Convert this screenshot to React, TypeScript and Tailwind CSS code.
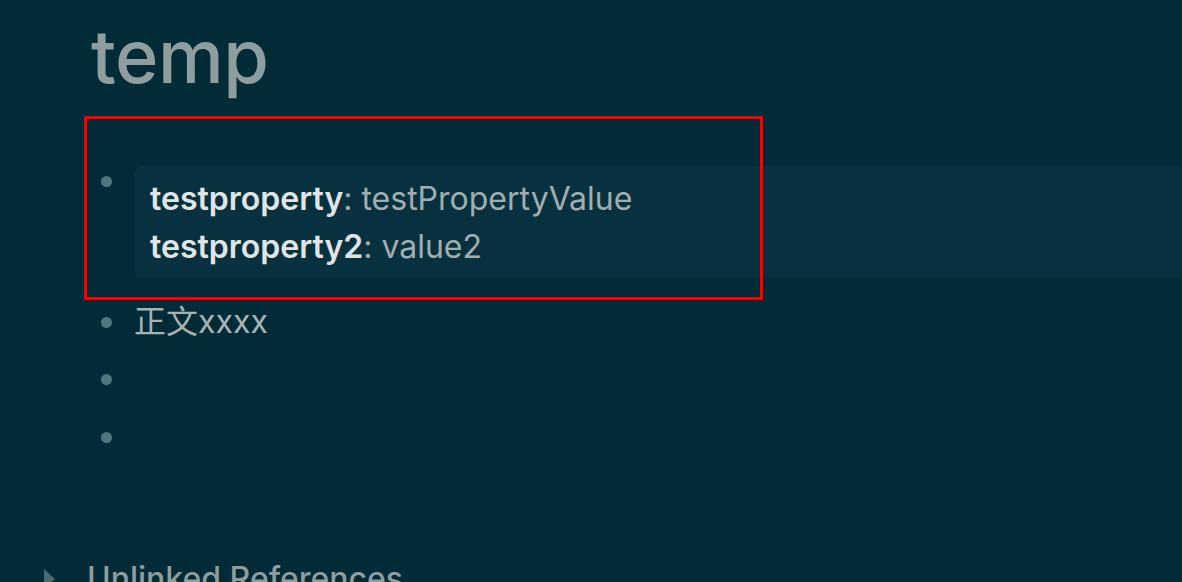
const font = { fontFamily: 'Inter, "Noto Sans CJK SC", "Noto Sans", sans-serif' };

type Prop = { key: string; value: string };

const props: Prop[] = [
	{ key: 'testproperty', value: 'testPropertyValue' },
	{ key: 'testproperty2', value: 'value2' },
];

function Bullet({ h }: { h: string }) {
	return (
		<div className={`flex w-[44px] shrink-0 items-center justify-center ${h}`}>
			<span className="block h-[11px] w-[11px] rounded-full bg-[#4d777d]" />
		</div>
	);
}

function EmptyBlock() {
	return (
		<div className="flex">
			<Bullet h="h-[48px]" />
			<div className="ml-[6px] h-[48px] flex-1" />
		</div>
	);
}

export default function App() {
	return (
		<div className="relative h-[582px] w-[1182px] overflow-hidden bg-[#022a37]" style={font}>
			<div className="pl-[91px] pt-[19px]">
				<h1 className="text-[74px] font-medium leading-[74px] tracking-[-0.5px] text-[#8e9d9e]">temp</h1>
			</div>

			<div className="mt-[73px] pl-[84px]">
				{/* properties block */}
				<div className="flex">
					<Bullet h="h-[30px]" />
					<div className="ml-[6px] flex-1 rounded-l-lg bg-[#07313e] pb-[7px] pt-[9px] pl-[16px] text-[32px] leading-[48px]">
						{props.map((p) => (
							<div key={p.key} className="whitespace-nowrap">
								<span className="font-semibold text-[#e1e4e4]">{p.key}</span>
								<span className="text-[#a1aeaf]">: {p.value}</span>
							</div>
						))}
					</div>
				</div>

				<div className="mt-[20px] flex">
					<Bullet h="h-[48px]" />
					<div className="ml-[6px] flex-1 text-[32px] leading-[48px] text-[#a6b3b3]">正文xxxx</div>
				</div>
				<div className="mt-[9px]">
					<EmptyBlock />
				</div>
				<div className="mt-[10px]">
					<EmptyBlock />
				</div>
			</div>

			<div className="mt-[95px] flex items-start pl-[44px]">
				<svg width="11" height="20" viewBox="0 0 11 20" className="mt-[13px] shrink-0">
					<path d="M0 0 L11 10 L0 20 Z" fill="#4a6a72" />
				</svg>
				<div className="ml-[32px] text-[32px] font-medium leading-[45px] text-[#8e9d9e]">Unlinked References</div>
			</div>

			{/* highlight frame */}
			<div className="pointer-events-none absolute left-[84px] top-[116px] h-[184px] w-[679px] border-[3px] border-[#ff0000]" />
		</div>
	);
}
